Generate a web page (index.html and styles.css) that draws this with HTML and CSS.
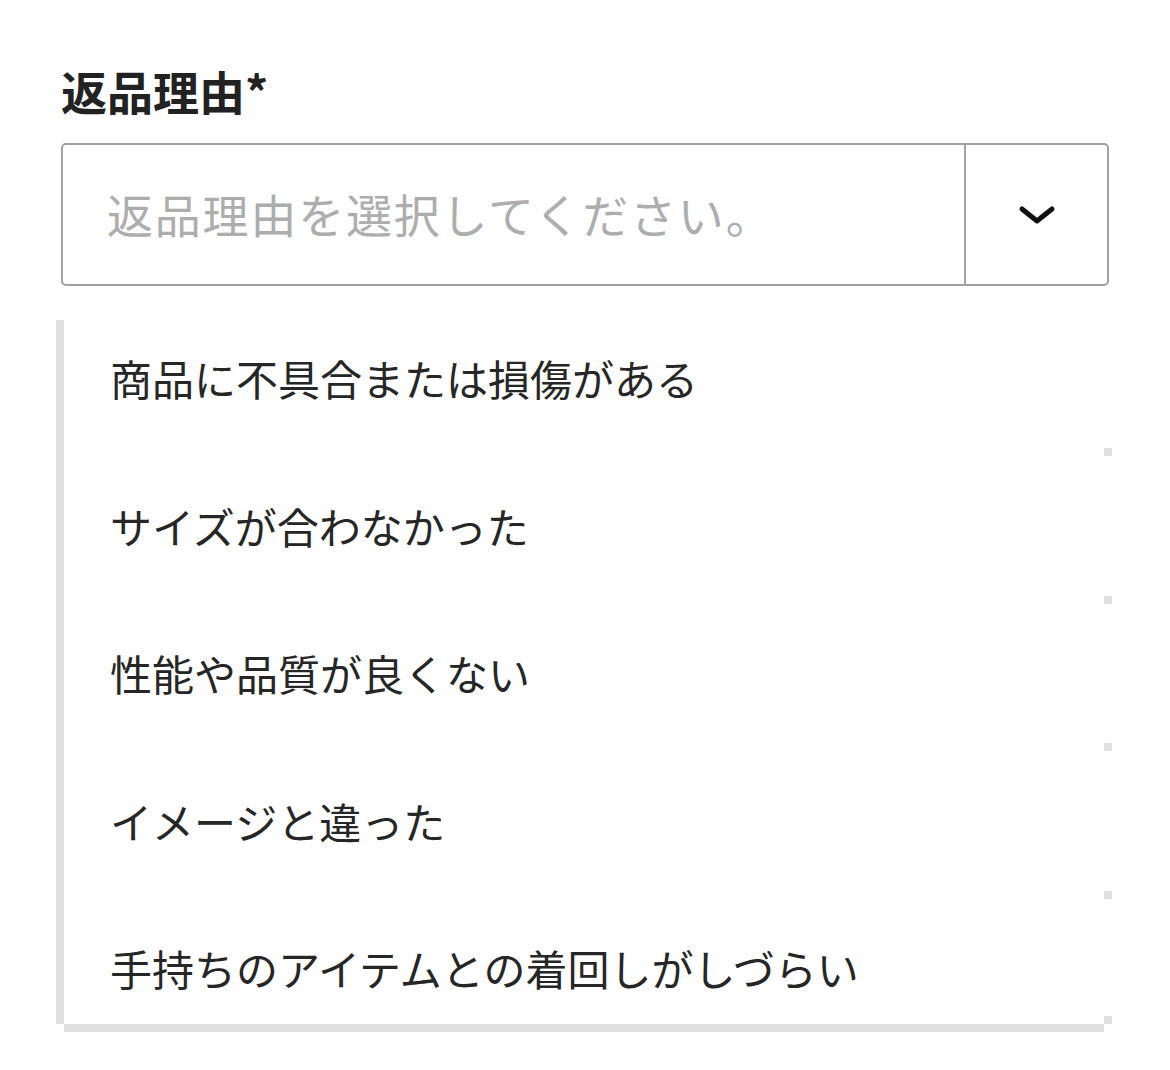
FILE: index.html
```html
<!DOCTYPE html>
<html lang="ja">
<head>
<meta charset="utf-8">
<title>返品理由</title>
<link rel="stylesheet" href="styles.css">
</head>
<body>
<div class="form">
  <div class="label">返品理由*</div>
  <div class="select">
    <div class="select-text">返品理由を選択してください。</div>
    <div class="select-btn">
      <svg width="38" height="20" viewBox="0 0 38 20"><polyline points="4,4 19,16 34,4" fill="none" stroke="#111" stroke-width="5" stroke-linecap="round" stroke-linejoin="round"/></svg>
    </div>
  </div>
  <ul class="dropdown">
    <li class="item">商品に不具合または損傷がある</li>
    <li class="item">サイズが合わなかった</li>
    <li class="item">性能や品質が良くない</li>
    <li class="item">イメージと違った</li>
    <li class="item">手持ちのアイテムとの着回しがしづらい</li>
  </ul>
</div>
</body>
</html>
```
FILE: styles.css
```css
html, body {
  margin: 0;
  padding: 0;
  background: #fff;
}
body {
  font-family: "Noto Sans CJK JP", "Noto Sans", sans-serif;
  padding-bottom: 38px;
}
.form {
  padding: 62px 0 0 61px;
  width: 1048px;
}
.label {
  font-size: 46px;
  font-weight: 700;
  line-height: 56px;
  color: #222;
}
.select {
  margin-top: 25px;
  height: 139px;
  border: 2px solid #a2a2a2;
  border-radius: 5px;
  display: flex;
  align-items: stretch;
}
.select-text {
  flex: 1;
  display: flex;
  align-items: center;
  padding: 0 0 4px 44px;
  font-size: 46px;
  letter-spacing: 1.8px;
  color: #adadad;
}
.select-btn {
  width: 141px;
  border-left: 2px solid #a2a2a2;
  display: flex;
  align-items: center;
  justify-content: center;
}
.dropdown {
  list-style: none;
  margin: 34px 0 0 3px;
  padding: 34px 0 32px 46px;
  width: 994px;
  border-bottom: 8px solid #e0e0e0;
  position: relative;
  display: flex;
  flex-direction: column;
  gap: 99.5px;
}
.dropdown::before {
  content: "";
  position: absolute;
  left: -8px;
  top: 0;
  bottom: 0;
  width: 8px;
  background: #e0e0e0;
}
.item {
  position: relative;
  font-size: 42px;
  line-height: 48px;
  color: #262626;
}
.item::after {
  content: "";
  position: absolute;
  right: -8px;
  top: 94px;
  width: 8px;
  height: 8px;
  background: #e0e0e0;
}
.item:last-child::after {
  top: 72px;
}
```
